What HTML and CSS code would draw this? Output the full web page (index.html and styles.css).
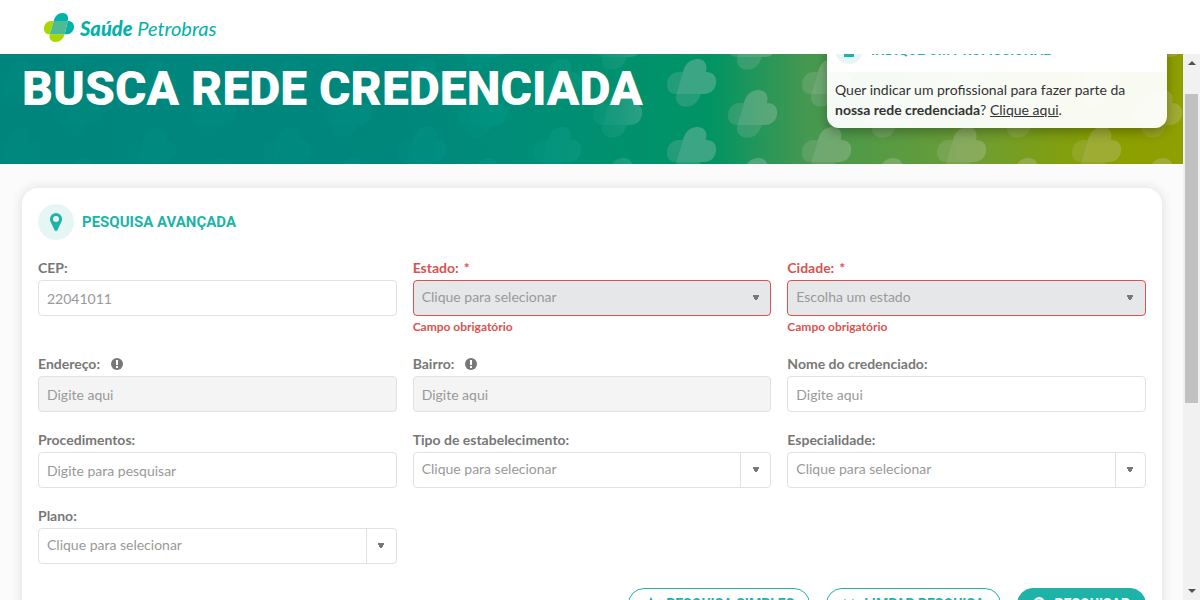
FILE: index.html
```html
<!DOCTYPE html>
<html lang="pt-BR">
<head>
<meta charset="utf-8">
<meta name="viewport" content="width=device-width, initial-scale=1">
<title>Busca Rede Credenciada</title>
<link rel="stylesheet" href="styles.css">
</head>
<body>
<header class="topbar">
  <a class="brand" href="#">
    <svg class="brand-mark" viewBox="0 0 30 29" aria-hidden="true">
      <path fill="#a8d800" d="M9.700 8H7C3 8 0 11.500 0 15.500C0 19.500 2 21.300 5.700 21.300ZM5.700 21.300C4.500 26 7.500 29 11.500 29C16.500 29 19 26 20.700 21.300Z"/>
      <path fill="#00b2a9" d="M9.700 8C11 3 14 0 18.500 0C23 0 25 3.500 23.700 8ZM23.700 8C28 8 30 10.500 30 13.500C30 18 27 21.300 22.500 21.300H20.700Z"/>
      <path fill="#4fbb93" d="M9.700 8H23.700L20.700 21.300H5.700Z"/>
    </svg>
    <span class="brand-name"><b>Saúde</b> Petrobras</span>
  </a>
</header>
<div class="viewport">
  <main class="content">
    <section class="hero">
      <svg class="hero-art" viewBox="0 0 1183 110" preserveAspectRatio="xMidYMid slice" aria-hidden="true">
        <defs>
          <g id="leaf" fill="#fff">
            <path opacity=".5" d="M9.700 8H7C3 8 0 11.500 0 15.500C0 19.500 2 21.300 5.700 21.300ZM5.700 21.300C4.500 26 7.500 29 11.500 29C16.500 29 19 26 20.700 21.300Z"/>
            <path opacity=".85" d="M9.700 8C11 3 14 0 18.500 0C23 0 25 3.500 23.700 8C28 8 30 10.500 30 13.500C30 18 27 21.300 22.500 21.300H5.700Z"/>
          </g>
          <pattern id="leaves" x="120" y="0" width="135" height="68" patternUnits="userSpaceOnUse">
            <use href="#leaf" transform="translate(7 5) scale(1.64)"/>
            <use href="#leaf" transform="translate(68 36) scale(1.64)"/>
            <use href="#leaf" transform="translate(68 -32) scale(1.64)"/>
          </pattern>
          <mask id="leafMask"><rect width="1183" height="110" fill="url(#leaves)"/></mask>
          <linearGradient id="tint">
            <stop offset="0" stop-color="#00a896" stop-opacity=".1"/>
            <stop offset=".3" stop-color="#00a896" stop-opacity=".15"/>
            <stop offset=".43" stop-color="#00a896" stop-opacity=".3"/>
            <stop offset=".5" stop-color="#20a896" stop-opacity=".3"/>
            <stop offset=".56" stop-color="#d0d0d0" stop-opacity=".34"/>
            <stop offset="1" stop-color="#d8d0c0" stop-opacity=".3"/>
          </linearGradient>
        </defs>
        <rect width="1183" height="110" fill="url(#tint)" mask="url(#leafMask)"/>
      </svg>
      <h1 class="hero-title">BUSCA REDE CREDENCIADA</h1>
      <aside class="notice">
        <div class="notice-head">
          <span class="notice-icon">
            <svg viewBox="0 0 12 14" aria-hidden="true"><circle cx="6" cy="4" r="3.500"/><path d="M1 14V11C1 8 11 8 11 11V14Z"/></svg>
          </span>
          <h2 class="notice-title">INDIQUE UM PROFISSIONAL</h2>
        </div>
        <p class="notice-body">Quer indicar um profissional para fazer parte da <b>nossa rede credenciada</b>? <a href="#">Clique aqui</a>.</p>
      </aside>
    </section>
    <form class="panel">
      <div class="panel-head">
        <span class="panel-icon">
          <svg viewBox="0 0 12 18" aria-hidden="true"><path fill-rule="evenodd" d="M6 0A6 6 0 0 0 0 6C0 8 .8 9.200 1.400 10.500L4.500 17Q6 19 7.500 17L10.600 10.500C11.200 9.200 12 8 12 6A6 6 0 0 0 6 0ZM6 3A3 3 0 1 1 6 9A3 3 0 0 1 6 3Z"/></svg>
        </span>
        <h2 class="panel-title">PESQUISA AVANÇADA</h2>
      </div>
      <div class="fields">
        <div class="field">
          <label for="cep">CEP:</label>
          <input id="cep" type="text" value="22041011">
        </div>
        <div class="field invalid">
          <label for="estado">Estado: <span class="star">*</span></label>
          <div class="select"><select id="estado" disabled><option>Clique para selecionar</option></select></div>
          <span class="error">Campo obrigatório</span>
        </div>
        <div class="field invalid">
          <label for="cidade">Cidade: <span class="star">*</span></label>
          <div class="select"><select id="cidade" disabled><option>Escolha um estado</option></select></div>
          <span class="error">Campo obrigatório</span>
        </div>
        <div class="field">
          <label for="endereco">Endereço: <svg class="info" viewBox="0 0 12 12" aria-hidden="true"><circle cx="6" cy="6" r="6"/><path fill="#fff" d="M4.900 2H7.100L6.900 7H5.100ZM5 8H7V10H5Z"/></svg></label>
          <input id="endereco" type="text" placeholder="Digite aqui" disabled>
        </div>
        <div class="field">
          <label for="bairro">Bairro: <svg class="info" viewBox="0 0 12 12" aria-hidden="true"><circle cx="6" cy="6" r="6"/><path fill="#fff" d="M4.900 2H7.100L6.900 7H5.100ZM5 8H7V10H5Z"/></svg></label>
          <input id="bairro" type="text" placeholder="Digite aqui" disabled>
        </div>
        <div class="field">
          <label for="nome">Nome do credenciado:</label>
          <input id="nome" type="text" placeholder="Digite aqui">
        </div>
        <div class="field">
          <label for="procedimentos">Procedimentos:</label>
          <input id="procedimentos" type="text" placeholder="Digite para pesquisar">
        </div>
        <div class="field">
          <label for="tipo">Tipo de estabelecimento:</label>
          <div class="select"><select id="tipo"><option>Clique para selecionar</option></select></div>
        </div>
        <div class="field">
          <label for="especialidade">Especialidade:</label>
          <div class="select"><select id="especialidade"><option>Clique para selecionar</option></select></div>
        </div>
        <div class="field">
          <label for="plano">Plano:</label>
          <div class="select"><select id="plano"><option>Clique para selecionar</option></select></div>
        </div>
      </div>
      <div class="actions">
        <button type="button" class="btn">
          <svg viewBox="0 0 14 14" aria-hidden="true"><path d="M7 0L9 4H8.500V14H5.500V4H5Z"/></svg>PESQUISA SIMPLES</button>
        <button type="reset" class="btn">
          <svg viewBox="0 0 14 14" aria-hidden="true"><path d="M3 2L7 6L11 2L12.500 3.500L8.500 7.500L12.500 11.500L11 13L7 9L3 13L1.500 11.500L5.500 7.500L1.500 3.500Z"/></svg>LIMPAR PESQUISA</button>
        <button type="submit" class="btn btn-primary">
          <svg viewBox="0 0 14 14" aria-hidden="true"><path fill-rule="evenodd" d="M6 0A6 6 0 1 0 9.500 11L12.500 14L14 12.500L11 9.500A6 6 0 0 0 6 0ZM6 2.500A3.500 3.500 0 1 1 6 9.500A3.500 3.500 0 0 1 6 2.500Z"/></svg>PESQUISAR</button>
      </div>
    </form>
  </main>
  <div class="scrollbar" aria-hidden="true">
    <svg viewBox="0 0 8 4"><path d="M0 4L4 0L8 4Z"/></svg>
    <span class="thumb"></span>
    <svg viewBox="0 0 8 4"><path d="M0 0L4 4L8 0Z"/></svg>
  </div>
</div>
</body>
</html>
```
FILE: styles.css
```css
* { box-sizing: border-box; }

body {
  margin: 0;
  height: 100vh;
  display: flex;
  flex-direction: column;
  overflow: hidden;
  background: #fbfbfb;
  color: #333;
  font: 14px/20px Lato, sans-serif;
}

h1, h2, p { margin: 0; }
h1, h2 { font-family: Roboto, sans-serif; }

.topbar {
  flex: none;
  display: flex;
  align-items: center;
  height: 54px;
  padding: 0 44px;
  background: #fff;
}
.brand {
  display: flex;
  align-items: center;
  gap: 6px;
  color: #00b2a9;
  text-decoration: none;
}
.brand-mark { width: 30px; height: 29px; }
.brand-name { padding-top: 2px; font-size: 20px; font-style: italic; font-weight: 400; }
.brand-name b { font-weight: 900; }

.viewport { flex: 1; min-height: 0; display: flex; }
.content { flex: 1; min-width: 0; overflow: hidden; }

.hero {
  display: grid;
  grid-template-columns: 1fr 340px;
  height: 110px;
  padding: 0 16px 0 22px;
  overflow: hidden;
  position: relative;
  background: linear-gradient(90deg, #00857c 0%, #00877c 34%, #008e76 46%, #009464 60%, #449851 68%, #6c9d35 82%, #8aa000 93%, #8f9f00 100%);
}
.hero-art { position: absolute; inset: 0; width: 100%; height: 100%; }
.hero-title {
  position: relative;
  padding-top: 5px;
  color: #fff;
  font-size: 48px;
  font-weight: 900;
  line-height: 60px;
  white-space: nowrap;
}
.notice {
  position: relative;
  align-self: end;
  margin-bottom: 36px;
  border-radius: 12px;
  overflow: hidden;
  box-shadow: 0 4px 12px rgba(0, 0, 0, .3);
}
.notice-head {
  display: flex;
  align-items: center;
  gap: 8px;
  padding: 8px;
  background: #fff;
}
.notice-icon, .panel-icon {
  display: grid;
  place-items: center;
  border-radius: 50%;
  background: #e6f6f5;
  fill: #1eb3a8;
}
.notice-icon { width: 28px; height: 28px; }
.notice-icon svg { width: 12px; height: 14px; }
.notice-title { color: #1eb3a8; font-size: 14px; line-height: 20px; }
.notice-body { padding: 8px; background: rgba(255, 255, 255, .95); }
.notice-body a { color: inherit; }

.panel {
  margin: 24px 21px 24px 22px;
  padding: 16px;
  border-radius: 16px;
  background: #fff;
  box-shadow: 0 0 12px rgba(0, 0, 0, .12);
}
.panel-head { display: flex; align-items: center; gap: 8px; margin-bottom: 20px; }
.panel-icon { width: 36px; height: 36px; }
.panel-icon svg { width: 12px; height: 18px; }
.panel-title { color: #1eb3a8; font-size: 15px; line-height: 24px; }

.fields {
  display: grid;
  grid-template-columns: repeat(3, 1fr);
  gap: 20px 16px;
}
.field { display: flex; flex-direction: column; color: #777; }
.field label { display: flex; align-items: center; height: 20px; font-weight: 700; line-height: 16px; padding-bottom: 4px; }
.star { margin-left: 5px; }
.info { width: 12px; height: 12px; margin-left: 11px; fill: #777; }
.error { padding-top: 2px; font-size: 12px; font-weight: 700; line-height: 18px; }
.invalid { color: #d9534f; }

.field input, .select {
  width: 100%;
  height: 36px;
  border: 1px solid #e1e1e1;
  border-radius: 4px;
  background: #fff;
}
.field input, .select select {
  padding: 0 8px;
  color: #999;
  font: inherit;
}
.field input::placeholder { color: #999; opacity: 1; }
.field input:disabled { background: #f4f4f4; }

.select { display: grid; grid-template-columns: 1fr 30px; }
.select select {
  grid-area: 1 / 1 / 2 / 3;
  width: 100%;
  padding: 0 38px 2px 8px;
  border: 0;
  background: none;
  appearance: none;
  opacity: 1;
}
.select::after {
  content: "";
  grid-area: 1 / 2;
  border-left: 1px solid #e1e1e1;
  background: conic-gradient(from -32deg at 50% 100%, #777 64deg, transparent 0) center / 8px 6px no-repeat;
  pointer-events: none;
}
.invalid .select { border-color: #d9534f; background: #e6e7e9; }
.invalid .select::after { border-color: transparent; }

.actions { display: flex; justify-content: flex-end; gap: 16px; margin-top: 24px; }
.btn {
  display: flex;
  align-items: center;
  gap: 8px;
  height: 32px;
  padding: 0 15px;
  border: 1px solid #1eb3a8;
  border-radius: 16px;
  background: #fff;
  color: #1eb3a8;
  fill: currentColor;
  font: 700 14px/20px Roboto, sans-serif;
}
.btn svg { width: 14px; height: 14px; }
.btn-primary { background: #1eb3a8; color: #fff; }

.scrollbar {
  flex: none;
  display: flex;
  flex-direction: column;
  align-items: center;
  width: 17px;
  padding: 7px 0;
  background: #f1f1f1;
  fill: #505050;
}
.scrollbar svg { flex: none; width: 8px; height: 4px; }
.thumb { width: 13px; height: 58%; margin: 29px 0 auto; background: #c1c1c1; }
```
